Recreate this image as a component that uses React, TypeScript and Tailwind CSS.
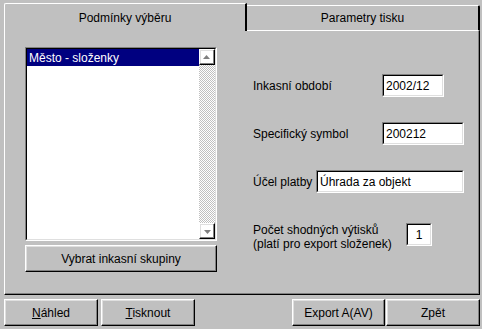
import React from 'react';

const raised =
  'border border-t-white border-l-white border-r-black border-b-black shadow-[inset_-1px_-1px_0_#808080,inset_1px_1px_0_#dfdfdf]';
const sunkenOuter = 'border border-t-[#808080] border-l-[#808080] border-r-white border-b-white';
const sunkenInner = 'border border-t-black border-l-black border-r-[#dfdfdf] border-b-[#dfdfdf]';

const Button: React.FC<{ className?: string; children: React.ReactNode }> = ({ className = '', children }) => (
  <div className={`${raised} h-[27px] flex items-center justify-center bg-[#c0c0c0] ${className}`}>{children}</div>
);

const Field: React.FC<{ width: string; value: string; center?: boolean }> = ({ width, value, center }) => (
  <div className={`${sunkenOuter} ${width} h-[23px] bg-white`}>
    <div
      className={`${sunkenInner} h-full flex items-center whitespace-nowrap ${center ? 'justify-center' : 'pl-[2px]'}`}
    >
      {value}
    </div>
  </div>
);

const Arrow: React.FC<{ down?: boolean }> = ({ down }) => (
  <div className={`${raised} w-[16px] h-[16px] flex items-center justify-center`}>
    <svg width="8" height="5" viewBox="0 0 8 5" className={down ? 'rotate-180' : ''}>
      <polygon points="3.5,0 7,4 0,4" fill="#808080" />
      <line x1="1" y1="4.5" x2="8" y2="4.5" stroke="#fff" strokeWidth="1" />
    </svg>
  </div>
);

export default function App() {
  return (
    <div className="w-[482px] h-[329px] bg-[#c0c0c0] text-black text-[12px] leading-[14px] font-['Liberation_Sans',Arial,sans-serif] flex flex-col">
      {/* Tabs */}
      <div className="flex items-start h-[31px] pl-[4px] pt-[3px]">
        <div className="w-[243px] h-[28px] border-t border-l border-white border-r-2 border-r-black rounded-tl-[2px] flex items-center justify-center pt-[1px]">
          Podmínky výběru
        </div>
        <div className="w-[233px] h-[26px] mt-[2px] border-t border-b border-white border-r-2 border-r-black rounded-tr-[2px] flex items-center justify-center">
          Parametry tisku
        </div>
      </div>

      {/* Panel */}
      <div className="w-[476px] h-[264px] ml-[4px] border-l border-white border-r border-b border-r-black border-b-black shadow-[inset_-1px_-1px_0_#808080] flex items-start pl-[20px] pt-[16px]">
        {/* Left column */}
        <div className="w-[192px] flex flex-col">
          <div className={`${sunkenOuter} h-[194px] bg-white`}>
            <div className={`${sunkenInner} h-full flex`}>
              <div className="flex-1">
                <div className="h-[17px] bg-[#000080] text-white flex items-center pl-[2px]">Město - složenky</div>
              </div>
              <div className="w-[16px] flex flex-col">
                <Arrow />
                <div className="flex-1 bg-[image:conic-gradient(#fff_25%,#c0c0c0_0_50%,#fff_0_75%,#c0c0c0_0)] bg-[length:2px_2px]" />
                <Arrow down />
              </div>
            </div>
          </div>
          <Button className="mt-[4px]">Vybrat inkasní skupiny</Button>
        </div>

        {/* Right column */}
        <div className="ml-[36px] mt-[27px] flex flex-col">
          <div className="flex items-center h-[23px]">
            <span className="w-[129px]">Inkasní období</span>
            <Field width="w-[62px]" value="2002/12" />
          </div>
          <div className="flex items-center h-[23px] mt-[25px]">
            <span className="w-[129px]">Specifický symbol</span>
            <Field width="w-[82px]" value="200212" />
          </div>
          <div className="flex items-center h-[23px] mt-[25px]">
            <span className="w-[63px]">Účel platby</span>
            <Field width="w-[148px]" value="Úhrada za objekt" />
          </div>
          <div className="flex items-start mt-[30px]">
            <span className="w-[153px]">
              Počet shodných výtisků
              <br />
              (platí pro export složenek)
            </span>
            <Field width="w-[26px]" value="1" center />
          </div>
        </div>
      </div>

      {/* Bottom buttons */}
      <div className="flex mt-[4px] pl-[4px] pr-[2px]">
        <div className="flex gap-[3px]">
          <Button className="w-[94px]">
            <span><span className="underline">N</span>áhled</span>
          </Button>
          <Button className="w-[94px]">
            <span><span className="underline">T</span>isknout</span>
          </Button>
        </div>
        <div className="flex gap-[1px] ml-auto">
          <Button className="w-[93px]">Export A(AV)</Button>
          <Button className="w-[94px]">Zpět</Button>
        </div>
      </div>
    </div>
  );
}
